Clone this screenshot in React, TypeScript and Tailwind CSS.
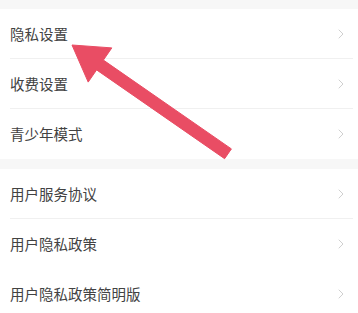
import { ChevronRight } from 'lucide-react';

const groups: string[][] = [
  ['隐私设置', '收费设置', '青少年模式'],
  ['用户服务协议', '用户隐私政策', '用户隐私政策简明版'],
];

function Row({ label, divider }: { label: string; divider: boolean }) {
  return (
    <div className="relative flex h-[50px] items-center pl-[10px] pr-[9px]">
      <span className="flex-1 text-[14.5px] text-[#424242]">{label}</span>
      <ChevronRight className="h-[16px] w-[16px] text-[#cccccc]" strokeWidth={1.4} />
      {divider && <div className="absolute bottom-0 left-[10px] right-[5px] h-px bg-[#f0f0f0]" />}
    </div>
  );
}

export default function App() {
  return (
    <div
      className="relative h-[313px] w-[358px] overflow-hidden bg-[#f7f7f7]"
      style={{ fontFamily: '"Noto Sans CJK SC", "Noto Sans", sans-serif' }}
    >
      <div className="h-[9px]" />
      {groups.map((items, g) => (
        <div key={g} className={`bg-white ${g > 0 ? 'mt-[10px]' : ''}`}>
          {items.map((label, i) => (
            <Row key={label} label={label} divider={i < items.length - 1 && !(g === 1 && i === 1)} />
          ))}
        </div>
      ))}

      {/* red arrow pointing at the first row */}
      <svg className="pointer-events-none absolute left-0 top-0" width="358" height="313">
        <polygon
          points="72,45 111.8,47.9 103.4,60.1 231.4,148.9 224.6,158.7 96.6,69.9 88.2,82.1"
          fill="#e94d64"
          stroke="#e94d64"
          strokeLinejoin="round"
          strokeWidth="1"
        />
      </svg>
    </div>
  );
}
